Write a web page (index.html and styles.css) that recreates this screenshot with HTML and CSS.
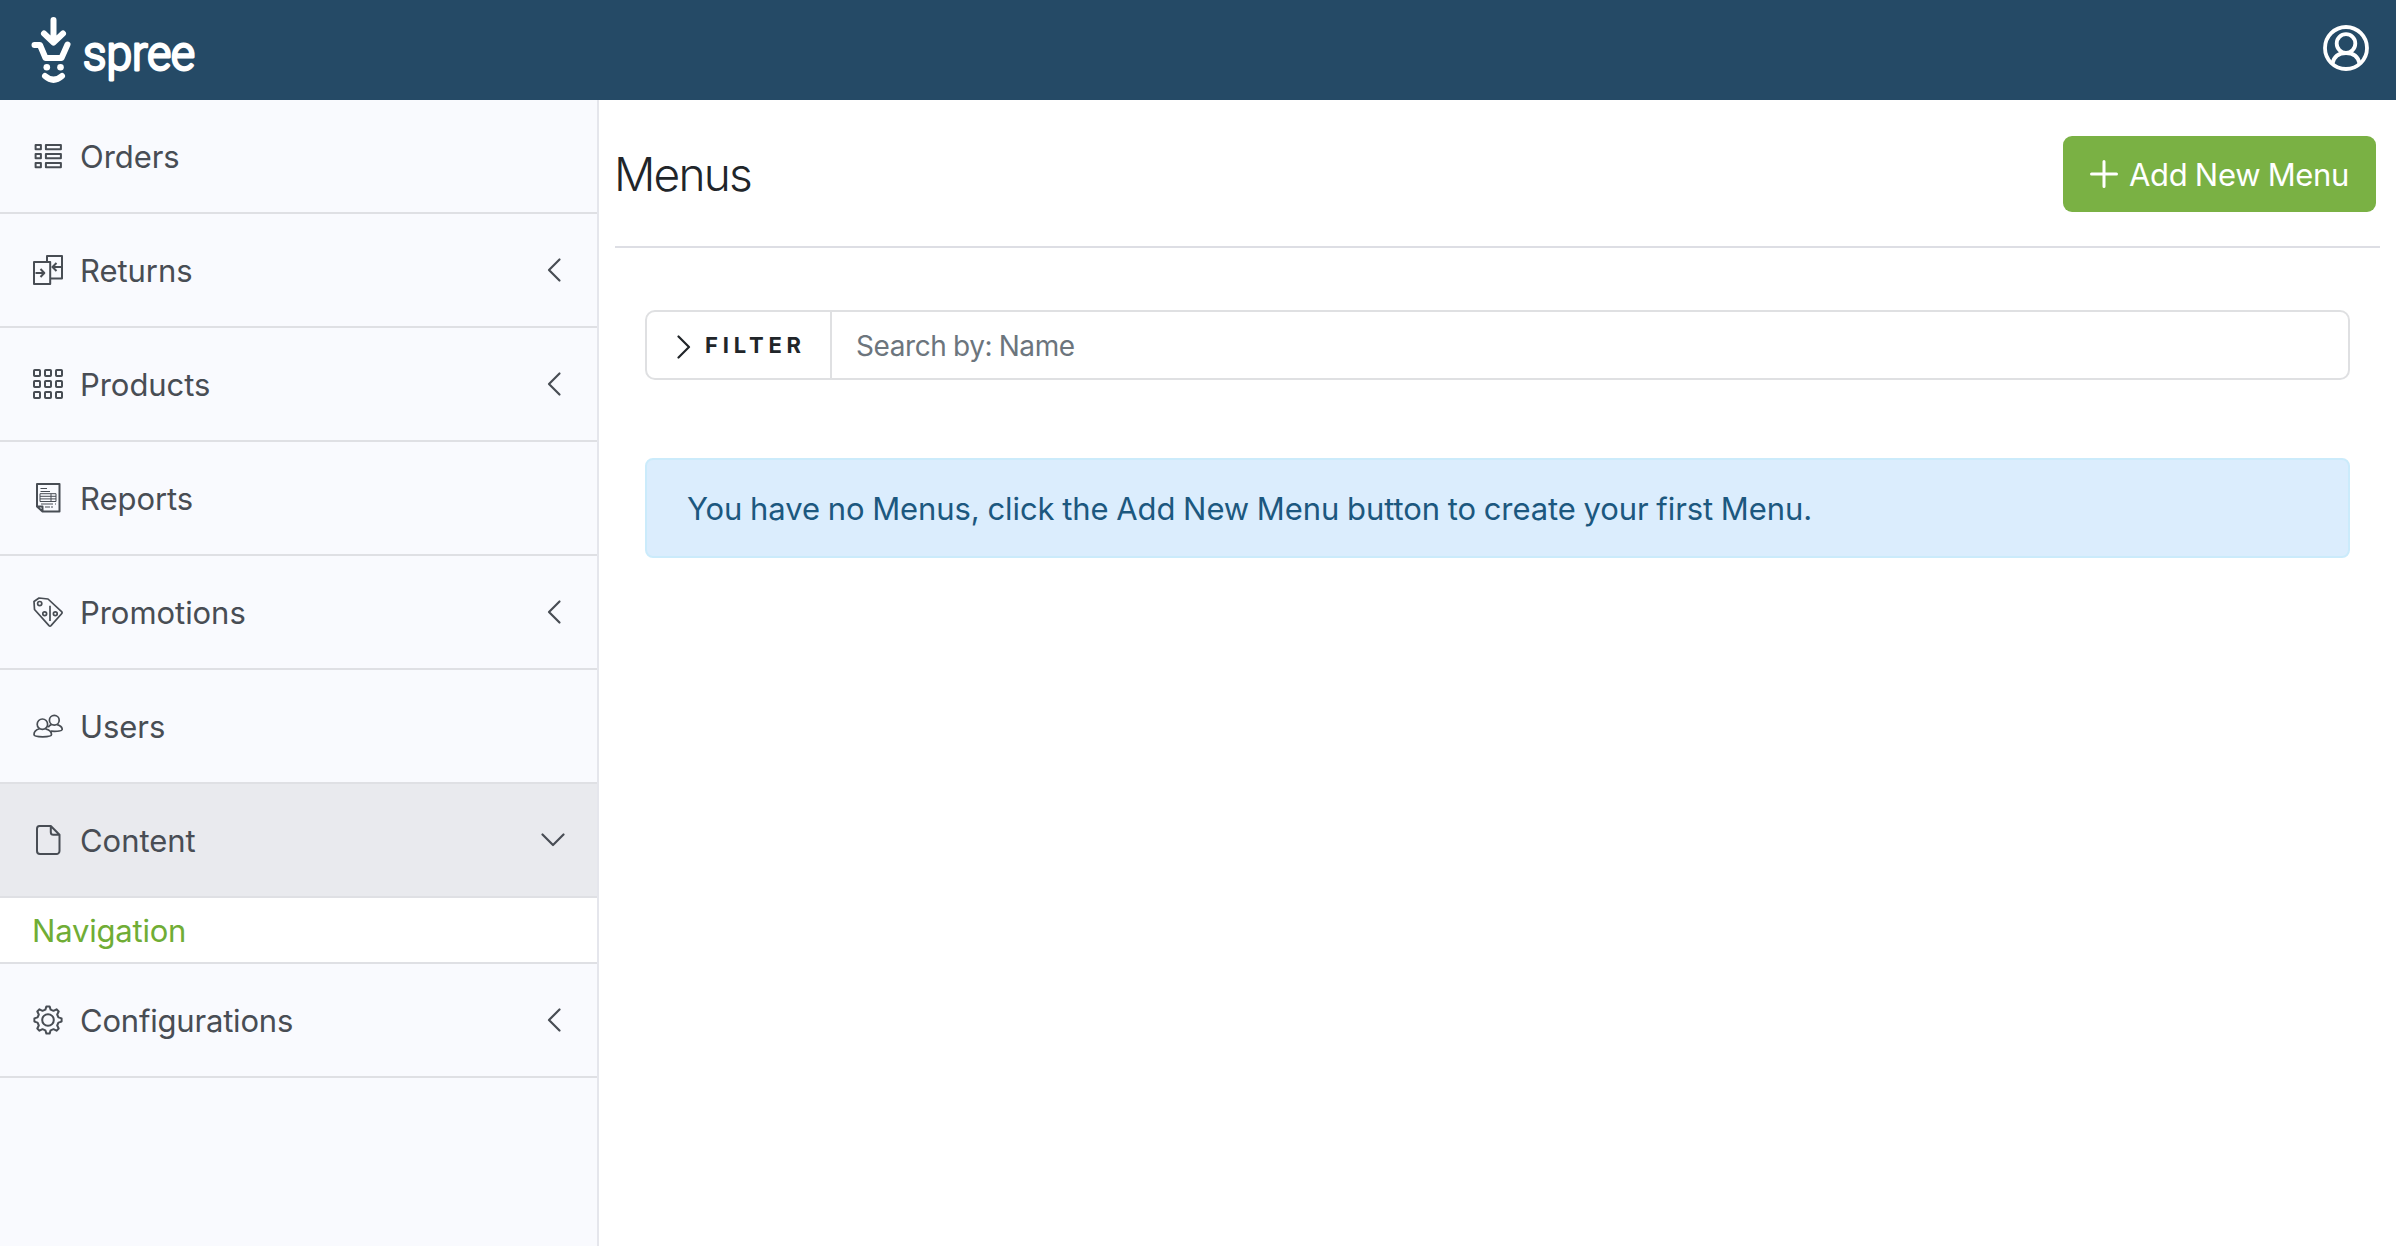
FILE: index.html
```html
<!DOCTYPE html>
<html lang="en">
<head>
<meta charset="utf-8">
<title>Menus</title>
<link rel="stylesheet" href="styles.css">
</head>
<body>
<header class="topbar">
  <svg class="logo" width="220" height="100" viewBox="0 0 220 100" role="img" aria-label="spree">
    <g fill="none" stroke="#fff" stroke-width="6" stroke-linecap="round" stroke-linejoin="round">
      <path d="M53.500 20V42M44 33.500L53.500 42.500L63 33.500"/>
      <path d="M34.500 45H40L45.500 58H61.500L67.500 44.500"/>
      <path d="M45 76Q53.500 83.500 62 76"/>
    </g>
    <circle cx="46.800" cy="67.300" r="3.300" fill="#fff"/>
    <circle cx="60.500" cy="67.300" r="3.300" fill="#fff"/>
    <text class="wordmark" x="83" y="70" textLength="112" lengthAdjust="spacingAndGlyphs">spree</text>
  </svg>
  <svg class="account" width="46" height="46" viewBox="0 0 46 46" fill="none" stroke="#fff" stroke-width="3.800">
    <circle cx="23" cy="23" r="21"/><circle cx="23" cy="18.500" r="9.300"/><path d="M9.500 38.500C11 31 16 28 23 28S35 31 36.500 38.500"/>
  </svg>
</header>
<div class="layout">
  <nav class="sidebar">
    <a class="item"><svg class="icon" viewBox="0 0 30 30"><path d="M2.600 3.900h5.300v4.300H2.600zM12.900 3.900h15v4.300h-15zM2.600 12.900h5.300v4.300H2.600zM12.900 12.900h15v4.300h-15zM2.600 21.900h5.300v4.300H2.600zM12.900 21.900h15v4.300h-15z"/></svg><span>Orders</span></a>
    <a class="item"><svg class="icon" viewBox="0 0 30 30"><path d="M1 7h16.200v22H1zM14 7V1h15v22.500H17.200M2.500 18H11M7.500 14l3.800 4-3.800 4M28 12h-8.500M23.500 8l-4 4 4 4"/></svg><span>Returns</span><svg class="chev" viewBox="0 0 26 26"><path d="M18.500 2.500L8 13l10.500 10.500"/></svg></a>
    <a class="item"><svg class="icon" viewBox="0 0 30 30"><rect x="1" y="1" width="6" height="6" rx=".8"/><rect x="12" y="1" width="6" height="6" rx=".8"/><rect x="23" y="1" width="6" height="6" rx=".8"/><rect x="1" y="12" width="6" height="6" rx=".8"/><rect x="12" y="12" width="6" height="6" rx=".8"/><rect x="23" y="12" width="6" height="6" rx=".8"/><rect x="1" y="23" width="6" height="6" rx=".8"/><rect x="12" y="23" width="6" height="6" rx=".8"/><rect x="23" y="23" width="6" height="6" rx=".8"/></svg><span>Products</span><svg class="chev" viewBox="0 0 26 26"><path d="M18.500 2.500L8 13l10.500 10.500"/></svg></a>
    <a class="item"><svg class="icon" viewBox="0 0 30 30"><path d="M4 1h22.500v27.500H9.500L4 23.500zM4 23.500h5.500v5"/><path class="fine" d="M7.500 5.500H14M7.500 8.500H17M8 21h12M22 21h1M12 24h5M18 24h2M7 10.700h16v7.800H7zM7 13.300h16M7 15.900h16M18 10.700v7.800"/></svg><span>Reports</span></a>
    <a class="item"><svg class="icon thin" viewBox="0 0 30 30"><path d="M1 4.500L6 1L15 2L28.600 14.700Q29.600 15.700 28.600 16.700L18 28.600Q17 29.600 16 28.600L1.500 12.500zM17 8.700V24"/><circle cx="6.700" cy="6.600" r="2.100"/><circle cx="11.700" cy="16.700" r="1.900"/><circle cx="22.300" cy="16.700" r="1.900"/></svg><span>Promotions</span><svg class="chev" viewBox="0 0 26 26"><path d="M18.500 2.500L8 13l10.500 10.500"/></svg></a>
    <a class="item"><svg class="icon thin" viewBox="0 0 30 30"><circle cx="9.400" cy="13.200" r="5.200"/><path d="M6.500 17.800C3 18.800 1 20.500 1 23.500C1 25 2.500 25.800 9.700 25.800S18.500 25 18.500 23.500C18.500 20.500 16 18.600 12.400 17.800"/><circle cx="21.300" cy="9.200" r="4.900"/><path d="M24.200 13.600C27.500 14.600 29.200 16.200 29.200 18.400C29.200 20 25 20.500 18 20.200M15.200 16.200Q16.500 14.200 18.500 13.600"/></svg><span>Users</span></a>
    <a class="item active"><svg class="icon" viewBox="0 0 30 30"><path d="M6.500 1H17.800L26.500 9.700V26a3 3 0 0 1-3 3H7a3 3 0 0 1-3-3V3.800Q4 1 6.500 1zM17.800 1V7.200Q17.800 9.700 20.300 9.700H26.500"/></svg><span>Content</span><svg class="chev" viewBox="0 0 26 26"><path d="M1.500 7.500L12 18L22.500 7.500"/></svg></a>
    <a class="subitem">Navigation</a>
    <a class="item"><svg class="icon" viewBox="0 0 30 30"><g transform="translate(15 15)"><circle r="5.800"/><path d="M-2.600-10.400L-1.600-13.600H1.600L2.600-10.400L5.500-9.200L8.500-10.700L10.700-8.500L9.200-5.500L10.400-2.600L13.600-1.600V1.600L10.400 2.600L9.200 5.500L10.700 8.500L8.500 10.700L5.500 9.200L2.600 10.400L1.600 13.600H-1.600L-2.600 10.400L-5.500 9.200L-8.500 10.700L-10.700 8.500L-9.200 5.500L-10.400 2.600L-13.600 1.600V-1.600L-10.400-2.600L-9.200-5.500L-10.700-8.500L-8.500-10.700L-5.500-9.200z"/></g></svg><span>Configurations</span><svg class="chev" viewBox="0 0 26 26"><path d="M18.500 2.500L8 13l10.500 10.500"/></svg></a>
  </nav>
  <main class="content">
    <div class="page-head">
      <h1 class="title">Menus</h1>
      <button class="add" type="button"><svg width="28" height="28" viewBox="0 0 28 28" fill="none" stroke="#fff" stroke-width="3" stroke-linecap="round"><path d="M14 1.500v25M1.500 14h25"/></svg><span>Add New Menu</span></button>
    </div>
    <div class="page-body">
      <div class="search">
        <button class="filter" type="button"><svg class="caret" width="14" height="24" viewBox="0 0 14 24" fill="none" stroke="#212529" stroke-width="2.200" stroke-linecap="round" stroke-linejoin="round"><path d="M1.500 1.500L12 12L1.500 22.500"/></svg><span>FILTER</span></button>
        <input class="query" type="text" placeholder="Search by: Name">
      </div>
      <div class="notice"><span>You have no Menus, click the Add New Menu button to create your first Menu.</span></div>
    </div>
  </main>
</div>
</body>
</html>
```
FILE: styles.css
```css
* { box-sizing: border-box; }
body {
  margin: 0;
  min-height: 100vh;
  display: flex;
  flex-direction: column;
  background: #fff;
  color: #212529;
  font-family: Inter, "Liberation Sans", sans-serif;
  font-size: 31px;
}
.topbar {
  height: 100px;
  padding-right: 27px;
  display: flex;
  justify-content: space-between;
  background: #254a66;
}
.logo { display: block; }
.wordmark {
  font-family: Roboto, sans-serif;
  font-size: 49px;
  font-weight: 300;
  fill: #fff;
  stroke: #fff;
  stroke-width: 2.8;
  stroke-linejoin: round;
}
.account { margin-top: 25px; }
.layout { flex: 1; display: flex; }
.sidebar {
  width: 599px;
  background: #f9fafe;
  border-right: 2px solid #e5e6ec;
  letter-spacing: -0.05px;
}
.item {
  height: 114px;
  padding: 0 30px 0 33px;
  display: flex;
  align-items: center;
  border-bottom: 2px solid #dfe0e4;
  color: #484d54;
}
.item:last-child { letter-spacing: -0.2px; }
.item.active { background: #e9eaee; }
.icon {
  width: 30px;
  height: 30px;
  margin-right: 17px;
  fill: none;
  stroke: #484d54;
  stroke-width: 2;
  stroke-linejoin: round;
}
.icon.thin { stroke-width: 1.7; }
.fine { stroke-width: 1; }
.chev {
  width: 26px;
  height: 26px;
  margin-left: auto;
  fill: none;
  stroke: #484d54;
  stroke-width: 2.2;
  stroke-linecap: round;
  stroke-linejoin: round;
}
.subitem {
  height: 66px;
  padding: 0 32px;
  display: flex;
  align-items: center;
  background: #fff;
  border-bottom: 2px solid #dfe0e4;
  color: #70ad35;
  letter-spacing: -0.2px;
}
.content { flex: 1; padding: 0 16px; }
.page-head {
  height: 148px;
  padding: 2px 4px 0 0;
  display: flex;
  align-items: center;
  justify-content: space-between;
  border-bottom: 2px solid #dddee4;
}
.title {
  margin: 0 0 0 -1px;
  font-size: 46px;
  font-weight: 350;
  letter-spacing: -1.8px;
}
.add {
  width: 313px;
  height: 76px;
  padding: 0 0 0 27px;
  display: flex;
  align-items: center;
  gap: 11px;
  border: 0;
  border-radius: 9px;
  background: #7ab144;
  color: #fff;
  font: inherit;
  letter-spacing: -0.3px;
  word-spacing: -1px;
  white-space: nowrap;
}
.page-body { padding: 62px 30px 0; }
.search {
  height: 70px;
  display: flex;
  border: 2px solid #dfe0e2;
  border-radius: 10px;
}
.filter {
  width: 185px;
  padding: 0 0 0 30px;
  display: flex;
  align-items: center;
  gap: 14px;
  border: 0;
  border-right: 2px solid #dfe0e2;
  background: none;
  color: #212529;
  font: 700 22px Inter, sans-serif;
  letter-spacing: 4.8px;
}
.caret { margin-top: 3px; }
.query {
  flex: 1;
  padding: 2px 24px 0;
  border: 0;
  outline: 0;
  background: none;
  font: 28px Inter, sans-serif;
  letter-spacing: -0.4px;
  word-spacing: -1px;
}
.query::placeholder { color: #6c757d; opacity: 1; }
.notice {
  height: 100px;
  margin-top: 78px;
  padding: 0 40px;
  display: flex;
  align-items: center;
  border: 2px solid #cbebfb;
  border-radius: 8px;
  background: #dbedfd;
  color: #1c587f;
  letter-spacing: -0.08px;
  word-spacing: -0.9px;
}
```
